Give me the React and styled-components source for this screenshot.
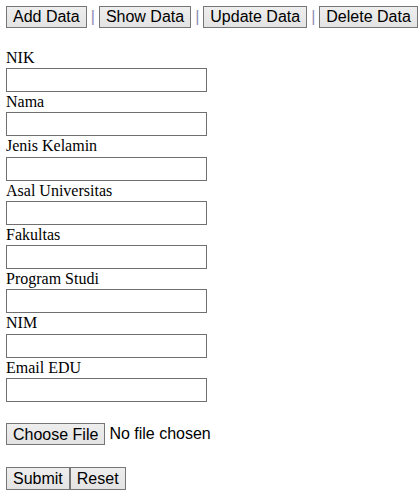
import React from 'react'
import styled, {createGlobalStyle} from 'styled-components'

const fields = ['NIK', 'Nama', 'Jenis Kelamin', 'Asal Universitas', 'Fakultas', 'Program Studi', 'NIM', 'Email EDU']

const App = () => {
    return(
        <>
            <Global />
            <Page>
                <Nav>
                    <Btn>Add Data</Btn>
                    <Sep>|</Sep>
                    <Btn>Show Data</Btn>
                    <Sep>|</Sep>
                    <Btn>Update Data</Btn>
                    <Sep>|</Sep>
                    <Btn>Delete Data</Btn>
                </Nav>
                <Form onSubmit={e => e.preventDefault()}>
                    {fields.map(f => (
                        <Field key={f}>
                            <Label>{f}</Label>
                            <Input type='text' />
                        </Field>
                    ))}
                    <FileRow>
                        <Btn type='button'>Choose File</Btn>
                        <FileText>No file chosen</FileText>
                    </FileRow>
                    <Actions>
                        <Btn type='submit'>Submit</Btn>
                        <Btn type='reset'>Reset</Btn>
                    </Actions>
                </Form>
            </Page>
        </>
    )
}

export default App

const Global = createGlobalStyle`
    body {
        margin: 0;
        background: #fff;
        font-family: "Liberation Serif", "Times New Roman", serif;
        font-size: 16px;
        color: #000;
    }
`;

const Page = styled.div`
    padding: 6px;
`;

const Nav = styled.div`
    display: flex;
    align-items: center;
    height: 22px;
`;

const Btn = styled.button`
    box-sizing: border-box;
    height: 22.4px;
    margin: 0;
    padding: 1.5px 6px 0.5px;
    font-family: "Liberation Sans", Arial, sans-serif;
    font-size: 16px;
    line-height: 18.4px;
    color: #000;
    background: linear-gradient(#eeeeee, #e3e3e3);
    border: 1px solid #767676;
    border-radius: 0;
    white-space: nowrap;
`;

const Sep = styled.span`
    font-family: "Liberation Sans", Arial, sans-serif;
    font-size: 16px;
    color: #8c8cb4;
    padding: 0 4px;
`;

const Form = styled.form`
    margin-top: 19.7px;
`;

const Field = styled.div`
    display: flex;
    flex-direction: column;
    align-items: flex-start;
`;

const Label = styled.label`
    display: block;
    line-height: 20.3px;
`;

const Input = styled.input`
    box-sizing: border-box;
    width: 201px;
    height: 24px;
    margin: 0;
    padding: 1px 2px;
    border: 1px solid #707070;
    font-family: "Liberation Sans", Arial, sans-serif;
    font-size: 13px;
    background: #fff;
`;

const FileRow = styled.div`
    display: flex;
    align-items: center;
    margin-top: 21px;
`;

const FileText = styled.span`
    font-family: "Liberation Sans", Arial, sans-serif;
    font-size: 16px;
    margin-left: 4px;
`;

const Actions = styled.div`
    display: flex;
    margin-top: 22px;
`;
